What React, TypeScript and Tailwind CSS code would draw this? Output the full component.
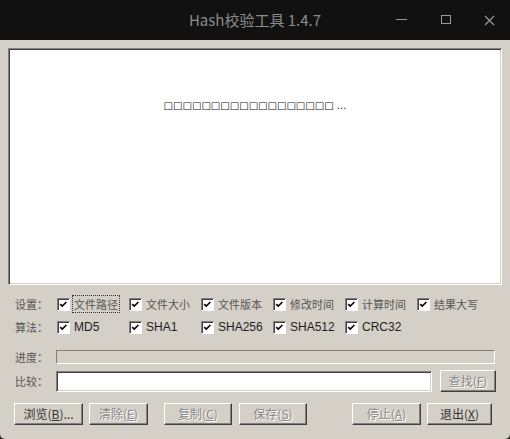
import React from 'react';

const cjk = "font-['Noto_Sans_CJK_SC',sans-serif]";

function Check({ label, latin, focus }: { label: string; latin?: boolean; focus?: boolean }) {
  return (
    <div className="flex items-center w-[72px] shrink-0">
      <span className="relative w-[13px] h-[13px] bg-white border border-t-[#808080] border-l-[#808080] border-b-white border-r-white shadow-[inset_1px_1px_0_#404040] shrink-0">
        <svg viewBox="0 0 11 11" className="absolute left-[1px] top-[1px] w-[9px] h-[9px]">
          <path d="M1.5 5 L4 7.5 L9 2.5" fill="none" stroke="#000" strokeWidth="1.9" />
        </svg>
      </span>
      <span
        className={
          latin
            ? "ml-[4px] text-[12px] leading-[16px] text-[#1e1e1e] font-['Liberation_Sans',sans-serif]"
            : `ml-[3px] px-[1px] text-[11px] leading-[16px] text-[#555] ${cjk} ${focus ? 'outline outline-1 outline-dotted outline-[#333]' : ''}`
        }
      >
        {label}
      </span>
    </div>
  );
}

function Btn({ children, w, enabled }: { children: React.ReactNode; w: string; enabled?: boolean }) {
  return (
    <div
      className={`${w} h-[22px] flex items-center justify-center border border-t-white border-l-white border-b-[#404040] border-r-[#404040] shadow-[inset_-1px_-1px_0_#808080] text-[12px] ${cjk} ${
        enabled ? 'text-[#333]' : 'text-[#888] [text-shadow:1px_1px_0_#fff]'
      }`}
    >
      {children}
    </div>
  );
}

export default function App() {
  const boxes = '□'.repeat(18);
  return (
    <div className="w-[510px] h-[439px] bg-[#2a2a2a] flex flex-col overflow-hidden">
      <div className="h-10 bg-[#111111] flex items-center relative shrink-0">
        <div className={`flex-1 text-center text-[15px] text-[#8c8c8c] ${cjk}`}>Hash校验工具 1.4.7</div>
        <div className="absolute right-0 top-0 h-10 flex items-center">
          <svg width="42" height="40" viewBox="0 0 42 40">
            <line x1="0" y1="19.5" x2="11" y2="19.5" stroke="#9a9a9a" strokeWidth="1" />
          </svg>
          <svg width="42" height="40" viewBox="0 0 42 40">
            <rect x="3.5" y="15.5" width="9" height="8" fill="none" stroke="#9a9a9a" strokeWidth="1" />
          </svg>
          <svg width="30" height="40" viewBox="0 0 30 40">
            <path d="M5 16 L14 25 M14 16 L5 25" stroke="#9a9a9a" strokeWidth="1.2" />
          </svg>
        </div>
      </div>

      <div className="flex-1 bg-[#d4d0c8] rounded-b-[5px] flex flex-col pl-[8px] pt-[8px]">
        <div className="w-[494px] h-[237px] bg-white border border-t-[#808080] border-l-[#808080] border-b-white border-r-white shadow-[inset_1px_1px_0_#404040,inset_-1px_-1px_0_#d4d0c8] pt-[42px] text-center">
          <span className="text-[10px] leading-[16px] text-[#111] font-['DejaVu_Sans',sans-serif]">
            {boxes} ...
          </span>
        </div>

        <div className="flex items-center mt-[11px] pl-[7px]">
          <span className={`w-[42px] text-[11px] leading-[16px] text-[#555] ${cjk}`}>设置：</span>
          <Check label="文件路径" focus />
          <Check label="文件大小" />
          <Check label="文件版本" />
          <Check label="修改时间" />
          <Check label="计算时间" />
          <Check label="结果大写" />
        </div>

        <div className="flex items-center mt-[7px] pl-[7px]">
          <span className={`w-[42px] text-[11px] leading-[16px] text-[#555] ${cjk}`}>算法：</span>
          <Check label="MD5" latin />
          <Check label="SHA1" latin />
          <Check label="SHA256" latin />
          <Check label="SHA512" latin />
          <Check label="CRC32" latin />
        </div>

        <div className="flex items-center mt-[15px] pl-[7px]">
          <span className={`w-[41px] text-[11px] leading-[14px] text-[#555] ${cjk}`}>进度：</span>
          <div className="w-[439px] h-[14px] border border-t-[#808080] border-l-[#808080] border-b-white border-r-white" />
        </div>

        <div className="flex items-center mt-[6px] pl-[7px]">
          <span className={`w-[41px] text-[11px] text-[#555] ${cjk}`}>比较：</span>
          <div className="w-[376px] h-[21px] bg-white border border-t-[#808080] border-l-[#808080] border-b-white border-r-white shadow-[inset_1px_1px_0_#404040,inset_-1px_-1px_0_#d4d0c8]" />
          <div className="ml-[8px]">
            <Btn w="w-[56px]">
              查找(<span className="underline">F</span>)
            </Btn>
          </div>
        </div>

        <div className="flex items-center mt-[11px] pl-[6px]">
          <Btn w="w-[69px]" enabled>
            浏览(<span className="underline">B</span>)...
          </Btn>
          <div className="ml-[6px]">
            <Btn w="w-[59px]">
              清除(<span className="underline">E</span>)
            </Btn>
          </div>
          <div className="ml-[16px]">
            <Btn w="w-[68px]">
              复制(<span className="underline">C</span>)
            </Btn>
          </div>
          <div className="ml-[7px]">
            <Btn w="w-[68px]">
              保存(<span className="underline">S</span>)
            </Btn>
          </div>
          <div className="ml-[45px]">
            <Btn w="w-[69px]">
              停止(<span className="underline">A</span>)
            </Btn>
          </div>
          <div className="ml-[6px]">
            <Btn w="w-[65px]" enabled>
              退出(<span className="underline">X</span>)
            </Btn>
          </div>
        </div>
      </div>
    </div>
  );
}
